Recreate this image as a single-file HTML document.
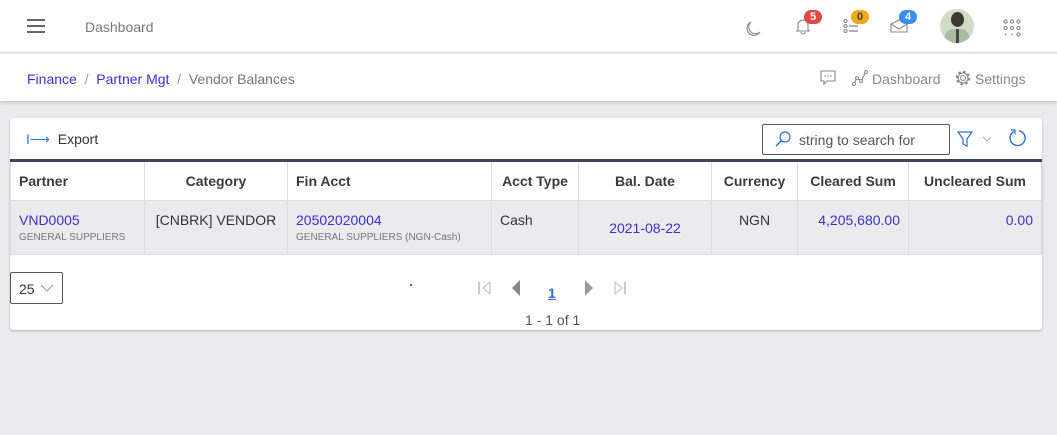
<!DOCTYPE html>
<html><head><style>
*{box-sizing:border-box;margin:0;padding:0}
body{width:1057px;height:435px;background:#ebebed;font-family:"Liberation Sans",sans-serif;position:relative;overflow:hidden;color:#333}
.abs{position:absolute}
.hdr{left:0;top:0;width:1057px;height:53px;background:#fff;border-bottom:1px solid #dcdcdc}
.bc{left:0;top:54px;width:1057px;height:47px;background:#fff;box-shadow:0 2px 3px rgba(0,0,0,.15)}
.card{left:10px;top:118px;width:1032px;height:212px;background:#fff;border-radius:3px;box-shadow:0 1px 2px rgba(0,0,0,.25)}
table{position:absolute;left:10px;top:159px;border-collapse:collapse;width:1032px;border-top:3px solid #3a475a;font-size:14px}
th{height:40px;font-weight:bold;color:#3a3a44;border:1px solid #dcdcdc;padding:0 8px}
td{height:54px;background:#ebebee;border:1px solid #dcdcdc;vertical-align:top;padding:11px 8px 0;color:#333}
.lk{color:#3a2fd0}
.sm{font-size:10px;color:#777;margin-top:4px}
.badge{position:absolute;color:#fff;font-size:11px;font-weight:bold;border-radius:8px;height:14px;line-height:14px;text-align:center;width:18px}
</style></head><body>
<div class="abs hdr">
 <div class="abs" style="left:27px;top:19px;width:18px;height:2px;background:#666;box-shadow:0 6px 0 #666,0 12px 0 #666"></div>
 <div class="abs" style="left:85px;top:19px;font-size:14px;color:#777">Dashboard</div>
 <svg class="abs" style="left:744px;top:20px" width="18" height="18" viewBox="0 0 18 18"><path d="M7 2a7 7 0 1 0 9 10 6 6 0 0 1-9-10z" fill="none" stroke="#888" stroke-width="1.1"/></svg>
 <svg class="abs" style="left:795px;top:17px" width="16" height="18" viewBox="0 0 16 18"><path d="M3 13V8a5 5 0 0 1 10 0v5l1 1H2zM6 15a2 2 0 0 0 4 0" fill="none" stroke="#888" stroke-width="1.1"/></svg>
 <div class="badge" style="left:804px;top:10px;background:#e04848">5</div>
 <svg class="abs" style="left:843px;top:18px" width="16" height="16" viewBox="0 0 16 16"><g fill="none" stroke="#888" stroke-width="1.1"><circle cx="2.5" cy="3" r="1.5"/><circle cx="2.5" cy="8" r="1.5"/><circle cx="2.5" cy="13" r="1.5"/></g><g stroke="#999" stroke-width="1.6"><path d="M6 8h9M6 13h9"/></g></svg>
 <div class="badge" style="left:851px;top:10px;background:#f0a818;color:#445">0</div>
 <svg class="abs" style="left:890px;top:19px" width="18" height="14" viewBox="0 0 18 14"><path d="M1 5l8-4 8 4v8H1zM1 5l8 5 8-5" fill="none" stroke="#888" stroke-width="1.1"/></svg>
 <div class="badge" style="left:899px;top:10px;background:#3a8ef0">4</div>
 <div class="abs" style="left:940px;top:9px;width:34px;height:34px;border-radius:50%;overflow:hidden;background:#cfdcc8">
  <div class="abs" style="left:11px;top:3px;width:13px;height:15px;border-radius:50%;background:#3a3a32"></div>
  <div class="abs" style="left:5px;top:20px;width:24px;height:16px;border-radius:8px 8px 0 0;background:#a9bca2"></div>
  <div class="abs" style="left:16px;top:20px;width:3px;height:14px;background:#444"></div>
 </div>
 <svg class="abs" style="left:1003px;top:19px" width="18" height="18" viewBox="0 0 18 18"><g fill="none" stroke="#888" stroke-width="1.1"><circle cx="2.5" cy="2.5" r="1.6"/><circle cx="9" cy="2.5" r="1.6"/><circle cx="15.5" cy="2.5" r="1.6"/><circle cx="2.5" cy="9" r="1.6"/><circle cx="9" cy="9" r="1.6"/><circle cx="15.5" cy="9" r="1.6"/><circle cx="15.5" cy="15.5" r="1.6"/></g><g fill="#888"><circle cx="2.5" cy="15.5" r=".8"/><circle cx="9" cy="15.5" r=".8"/></g></svg>
</div>
<div class="abs bc">
 <div class="abs" style="left:27px;top:17px;font-size:14px;color:#999"><span class="lk">Finance</span> &nbsp;/&nbsp; <span class="lk">Partner Mgt</span> &nbsp;/&nbsp; <span style="color:#777">Vendor Balances</span></div>
 <svg class="abs" style="left:820px;top:16px" width="16" height="16" viewBox="0 0 16 16"><path d="M1 1h14v10H7l-3 3v-3H1z" fill="none" stroke="#888" stroke-width="1.1"/><g fill="#888"><circle cx="5" cy="6" r=".8"/><circle cx="8" cy="6" r=".8"/><circle cx="11" cy="6" r=".8"/></g></svg>
 <svg class="abs" style="left:852px;top:16px" width="16" height="16" viewBox="0 0 16 16"><path d="M2 14l3-6 4 3 5-9" fill="none" stroke="#888" stroke-width="1.1"/><g fill="#fff" stroke="#888"><circle cx="2" cy="14" r="1.5"/><circle cx="5" cy="8" r="1.5"/><circle cx="9" cy="11" r="1.5"/><circle cx="14" cy="2" r="1.5"/></g></svg>
 <div class="abs" style="left:872px;top:17px;font-size:14px;color:#888">Dashboard</div>
 <svg class="abs" style="left:955px;top:16px" width="16" height="16" viewBox="0 0 16 16"><circle cx="8" cy="8" r="2.5" fill="none" stroke="#888"/><circle cx="8" cy="8" r="6" fill="none" stroke="#888" stroke-width="2.5" stroke-dasharray="2.4 2.3"/><circle cx="8" cy="8" r="5" fill="none" stroke="#888"/></svg>
 <div class="abs" style="left:975px;top:17px;font-size:14px;color:#888">Settings</div>
</div>
<div class="abs card"></div>
<div class="abs" style="left:26px;top:131px;font-size:14px;color:#333"><span style="color:#2a7fd0">I⟶</span>&nbsp; Export</div>
<div class="abs" style="left:762px;top:124px;width:188px;height:31px;border:1px solid #555;border-radius:2px;font-size:14px;color:#555;padding:7px 0 0 36px">string to search for</div>
<svg class="abs" style="left:774px;top:130px" width="18" height="18" viewBox="0 0 18 18"><circle cx="11" cy="7" r="5" fill="none" stroke="#2a70d0" stroke-width="1.2"/><path d="M7.5 10.5L2 16" stroke="#2a70d0" stroke-width="1.4"/></svg>
<svg class="abs" style="left:957px;top:131px" width="40" height="16" viewBox="0 0 40 16"><path d="M1 1h14l-5 7v7l-4-2V8z" fill="none" stroke="#2a70d0" stroke-width="1.2"/><path d="M26 6l4 4 4-4" fill="none" stroke="#aab" stroke-width="1"/></svg>
<svg class="abs" style="left:1008px;top:128px" width="20" height="20" viewBox="0 0 20 20"><path d="M6 3.5A7.5 7.5 0 1 0 11 2.7" fill="none" stroke="#2a70d0" stroke-width="1.4"/><path d="M3 2h4v4" fill="none" stroke="#2a70d0" stroke-width="1.2"/></svg>
<table>
<tr><th style="width:134px;text-align:left">Partner</th><th style="width:143px">Category</th><th style="width:204px;text-align:left">Fin Acct</th><th style="width:87px">Acct Type</th><th style="width:133px">Bal. Date</th><th style="width:86px">Currency</th><th style="width:111px">Cleared Sum</th><th>Uncleared Sum</th></tr>
<tr><td><div class="lk">VND0005</div><div class="sm">GENERAL SUPPLIERS</div></td><td style="text-align:center">[CNBRK] VENDOR</td><td><div class="lk">20502020004</div><div class="sm">GENERAL SUPPLIERS (NGN-Cash)</div></td><td>Cash</td><td style="text-align:center;padding-top:19px" class="lk">2021-08-22</td><td style="text-align:center">NGN</td><td style="text-align:right" class="lk">4,205,680.00</td><td style="text-align:right" class="lk">0.00</td></tr>
</table>
<div class="abs" style="left:10px;top:272px;width:53px;height:32px;border:1px solid #555;border-radius:2px;font-size:14px;padding:8px 0 0 8px">25</div>
<svg class="abs" style="left:40px;top:284px" width="14" height="8" viewBox="0 0 14 8"><path d="M1 1l6 6 6-6" fill="none" stroke="#999"/></svg>
<div class="abs" style="left:410px;top:284px;width:2px;height:2px;background:#e03030"></div>
<svg class="abs" style="left:478px;top:280px" width="150" height="16" viewBox="0 0 150 16"><path d="M1 2v12" stroke="#bbb" stroke-width="1.5"/><path d="M12 2L5 8l7 6z" fill="none" stroke="#bbb"/><path d="M42 0l-8 8 8 8z" fill="#888"/><path d="M107 0l8 8-8 8z" fill="#999"/><path d="M137 2l7 6-7 6z" fill="none" stroke="#bbb"/><path d="M147 2v12" stroke="#bbb" stroke-width="1.5"/></svg>
<div class="abs" style="left:548px;top:285px;font-size:14px;font-weight:bold;color:#2a70d0;text-decoration:underline">1</div>
<div class="abs" style="left:525px;top:312px;font-size:14px;color:#555">1 - 1 of 1</div>
</body></html>
